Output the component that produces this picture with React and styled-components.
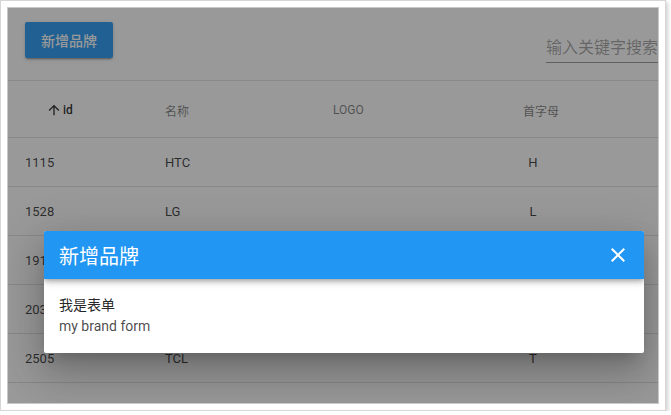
import React from 'react'
import styled, { createGlobalStyle } from 'styled-components'

const GlobalStyle = createGlobalStyle`
  html, body {
    margin: 0;
    padding: 0;
    background: #fff;
  }
  body {
    font-family: Roboto, "Noto Sans CJK SC", sans-serif;
  }
`

const brands = [
  { id: 1115, name: 'HTC', letter: 'H' },
  { id: 1528, name: 'LG', letter: 'L' },
  { id: 1912, name: '联想', letter: 'L' },
  { id: 2032, name: 'OPPO', letter: 'O' },
  { id: 2505, name: 'TCL', letter: 'T' },
]

const App = () => {
  return (
    <>
      <GlobalStyle />
      <Frame>
        <Viewport>
          <Page>
            <Toolbar>
              <AddButton>新增品牌</AddButton>
              <SearchField>
                <input placeholder="输入关键字搜索" />
              </SearchField>
            </Toolbar>
            <Table>
              <HeaderRow>
                <HeadCell active pad={38}>
                  <svg width="16" height="16" viewBox="0 0 24 24">
                    <path fill="currentColor" d="M4 12l1.41 1.41L11 7.83V20h2V7.83l5.58 5.59L20 12l-8-8-8 8z" />
                  </svg>
                  id
                </HeadCell>
                <HeadCell>名称</HeadCell>
                <HeadCell>LOGO</HeadCell>
                <HeadCell>首字母</HeadCell>
              </HeaderRow>
              {brands.map(b => (
                <Row key={b.id}>
                  <Cell pad={17}>{b.id}</Cell>
                  <Cell>{b.name}</Cell>
                  <Cell />
                  <Cell center>{b.letter}</Cell>
                </Row>
              ))}
            </Table>
          </Page>
          <Overlay />
          <Dialog>
            <DialogHeader>
              <DialogTitle>新增品牌</DialogTitle>
              <CloseButton>
                <svg width="24" height="24" viewBox="0 0 24 24">
                  <path fill="currentColor" d="M19,6.41L17.59,5L12,10.59L6.41,5L5,6.41L10.59,12L5,17.59L6.41,19L12,13.41L17.59,19L19,17.59L13.41,12L19,6.41Z" />
                </svg>
              </CloseButton>
            </DialogHeader>
            <DialogBody>
              <p>我是表单</p>
              <p className="sub">my brand form</p>
            </DialogBody>
          </Dialog>
        </Viewport>
      </Frame>
    </>
  )
}

export default App

const Frame = styled.div`
  width: 666px;
  height: 411px;
  box-sizing: border-box;
  border: 1px solid #d6d6d6;
  padding: 6px;
  background: #fff;
  box-shadow: 2px 2px 4px rgba(0, 0, 0, 0.18);
`

const Viewport = styled.div`
  position: relative;
  width: 652px;
  height: 397px;
  box-sizing: border-box;
  border: 1px solid #c8c8c8;
  overflow: hidden;
`

const Page = styled.div`
  background: #fff;
  height: 100%;
`

const Toolbar = styled.div`
  display: flex;
  justify-content: space-between;
  align-items: flex-start;
  height: 73px;
  box-sizing: border-box;
  padding: 14px 0 0 17px;
  border-bottom: 1px solid rgba(0, 0, 0, 0.12);
`

const AddButton = styled.button`
  height: 36px;
  width: 88px;
  border: none;
  border-radius: 2px;
  background: #2196f3;
  color: #fff;
  font-family: Roboto, "Noto Sans CJK SC", sans-serif;
  font-size: 14px;
  font-weight: 500;
  padding: 0 16px;
  box-shadow: 0 3px 1px -2px rgba(0, 0, 0, 0.2), 0 2px 2px 0 rgba(0, 0, 0, 0.14), 0 1px 5px 0 rgba(0, 0, 0, 0.12);
`

const SearchField = styled.div`
  width: 140px;
  margin-right: -28px;
  margin-top: 10px;
  border-bottom: 1px solid rgba(0, 0, 0, 0.42);

  input {
    width: 100%;
    border: none;
    outline: none;
    background: transparent;
    padding: 0;
    height: 30px;
    font-family: Roboto, "Noto Sans CJK SC", sans-serif;
    font-size: 16px;
  }
  input::placeholder {
    color: rgba(0, 0, 0, 0.38);
  }
`

const Table = styled.div`
  display: flex;
  flex-direction: column;
`

const HeaderRow = styled.div`
  display: grid;
  grid-template-columns: 157px 168px 190px 1fr;
  height: 57px;
  box-sizing: border-box;
  align-items: center;
  padding-top: 2px;
  border-bottom: 1px solid rgba(0, 0, 0, 0.12);
`

const HeadCell = styled.div`
  display: flex;
  align-items: center;
  padding-left: ${p => p.pad || 0}px;
  font-size: 12px;
  font-weight: ${p => (p.active ? 500 : 400)};
  color: ${p => (p.active ? 'rgba(0, 0, 0, 0.87)' : 'rgba(0, 0, 0, 0.54)')};

  svg {
    margin-right: 1px;
  }
`

const Row = styled.div`
  display: grid;
  grid-template-columns: 157px 168px 190px 1fr;
  height: 49px;
  box-sizing: border-box;
  align-items: center;
  border-bottom: 1px solid rgba(0, 0, 0, 0.12);
`

const Cell = styled.div`
  padding-left: ${p => p.pad || 0}px;
  width: ${p => (p.center ? '20px' : 'auto')};
  text-align: ${p => (p.center ? 'center' : 'left')};
  font-size: 13px;
  color: rgba(0, 0, 0, 0.8);
`

const Overlay = styled.div`
  position: absolute;
  inset: 0;
  background: rgba(33, 33, 33, 0.46);
`

const Dialog = styled.div`
  position: absolute;
  left: 36px;
  top: 223px;
  width: 600px;
  border-radius: 2px;
  overflow: hidden;
  background: #fff;
  box-shadow: 0 11px 15px -7px rgba(0, 0, 0, 0.2), 0 24px 38px 3px rgba(0, 0, 0, 0.14), 0 9px 46px 8px rgba(0, 0, 0, 0.12);
`

const DialogHeader = styled.div`
  position: relative;
  z-index: 1;
  display: flex;
  align-items: center;
  justify-content: space-between;
  height: 48px;
  padding: 0 14px 0 15px;
  background: #2196f3;
  color: #fff;
  box-shadow: 0 2px 4px -1px rgba(0, 0, 0, 0.2), 0 4px 5px 0 rgba(0, 0, 0, 0.14), 0 1px 10px 0 rgba(0, 0, 0, 0.12);
`

const DialogTitle = styled.div`
  font-size: 20px;
  font-weight: 400;
`

const CloseButton = styled.div`
  display: flex;
  width: 24px;
  height: 24px;
  color: #fff;
`

const DialogBody = styled.div`
  padding: 16px 15px;

  p {
    margin: 0;
    font-size: 14px;
    line-height: 21px;
    color: rgba(0, 0, 0, 0.87);
  }
  .sub {
    color: rgba(0, 0, 0, 0.72);
  }
`
